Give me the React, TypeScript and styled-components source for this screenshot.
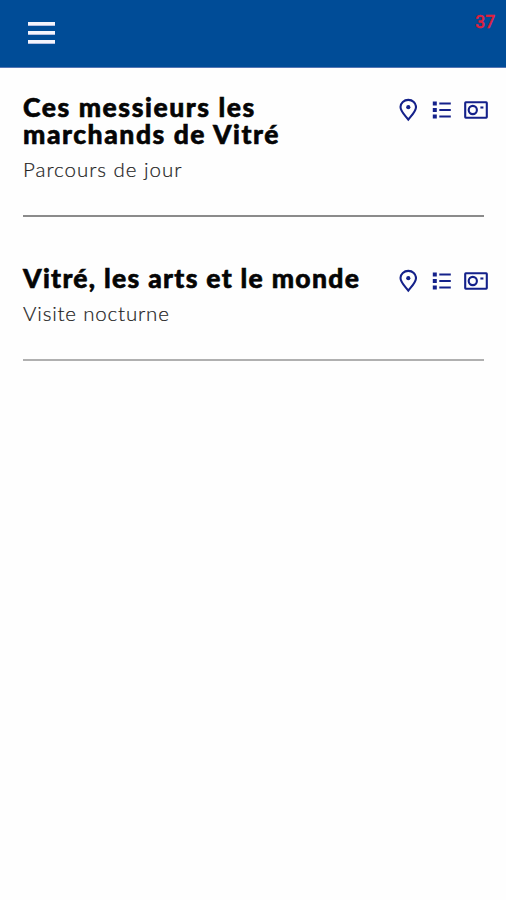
import React from "react";
import styled, { createGlobalStyle } from "styled-components";

const GlobalStyle = createGlobalStyle`
  * { box-sizing: border-box; }
  body { margin: 0; background: #fefefe; }
`;

const Page = styled.div`
  min-height: 900px;
  background: #fefefe;
  font-family: Lato, "Open Sans", sans-serif;
`;

const Header = styled.header`
  display: flex;
  justify-content: space-between;
  align-items: flex-start;
  height: 68px;
  padding: 0 11px 0 28px;
  background: #004c97;
  border-bottom: 1px solid #5576b4;
`;

const MenuButton = styled.button`
  display: flex;
  flex-direction: column;
  gap: 5px;
  margin-top: 22px;
  padding: 0;
  border: 0;
  background: none;
`;

const MenuBar = styled.span`
  width: 27px;
  height: 4px;
  background: #f4f4fc;
  border-bottom: 1px solid #b4bfe0;
`;

const Counter = styled.span`
  margin-top: 11px;
  font: 17.5px/22px Roboto, sans-serif;
  color: #e0203c;
  -webkit-text-stroke: 0.6px #e0203c;
`;

const List = styled.main`
  padding: 0 22px 0 23px;
`;

const Item = styled.article<{ $height: number; $top: number; $line: string }>`
  display: flex;
  justify-content: space-between;
  align-items: flex-start;
  height: ${(p) => p.$height}px;
  padding-top: ${(p) => p.$top}px;
  border-bottom: 2px solid ${(p) => p.$line};
`;

const Title = styled.h2`
  margin: 0;
  font-size: 26.5px;
  line-height: 27px;
  font-weight: 900;
  color: #050505;
  -webkit-text-stroke: 0.6px #050505;
`;

const TitleLine = styled.span<{ $tracking: number }>`
  display: block;
  white-space: nowrap;
  letter-spacing: ${(p) => p.$tracking}px;
`;

const Subtitle = styled.p<{ $tracking: number }>`
  margin: 9px 0 0;
  font-size: 20.5px;
  line-height: 24px;
  color: #222;
  font-weight: 300;
  -webkit-text-stroke: 0.2px #222;
  letter-spacing: ${(p) => p.$tracking}px;
`;

const Actions = styled.div`
  display: flex;
  align-items: center;
  height: 24px;
  margin: 4px -4px 0 0;
  color: #14218a;
`;

const Icon = styled.svg<{ $gap?: number }>`
  display: block;
  flex: none;
  margin-left: ${(p) => p.$gap ?? 0}px;
  fill: none;
  stroke: currentColor;
`;

const PinIcon = () => (
  <Icon width="18" height="24" viewBox="0 0 18 24" strokeWidth="2.1">
    <path d="M9.3 1.9C5 1.9 1.5 5 1.5 9C1.5 13.6 6.5 17.8 9.3 21.6C12.1 17.8 17 13.6 17 9C17 5 13.6 1.9 9.3 1.9Z" />
    <circle cx="9.3" cy="9.2" r="2.1" fill="currentColor" stroke="none" />
  </Icon>
);

const ListIcon = () => (
  <Icon $gap={15} width="19" height="18" viewBox="0 0 19 18">
    <path d="M0.8 2.5h4M0.8 9h4M0.8 15.5h4" strokeWidth="3.8" />
    <path d="M7.3 2.5h11.5M7.3 9h11.5M7.3 15.5h11.5" strokeWidth="2.1" />
  </Icon>
);

const CameraIcon = () => (
  <Icon $gap={13} width="24" height="18" viewBox="0 0 24 18" strokeWidth="2.1">
    <rect x="1.2" y="1.3" width="21.6" height="15.4" rx="0.6" />
    <circle cx="8.8" cy="9" r="4.1" />
    <path d="M16.4 6.5h3" />
  </Icon>
);

const tours = [
  {
    height: 149,
    top: 26,
    line: "#8b8b8b",
    lines: [
      { text: "Ces messieurs les", tracking: 1.57 },
      { text: "marchands de Vitré", tracking: 1.55 },
    ],
    subtitle: "Parcours de jour",
    subTracking: 0.98,
  },
  {
    height: 144,
    top: 48,
    line: "#b0b0b0",
    lines: [{ text: "Vitré, les arts et le monde", tracking: 1.3 }],
    subtitle: "Visite nocturne",
    subTracking: 0.82,
  },
];

export default function App() {
  return (
    <Page>
      <GlobalStyle />
      <Header>
        <MenuButton aria-label="Menu">
          <MenuBar />
          <MenuBar />
          <MenuBar />
        </MenuButton>
        <Counter>37</Counter>
      </Header>
      <List>
        {tours.map((t) => (
          <Item key={t.subtitle} $height={t.height} $top={t.top} $line={t.line}>
            <div>
              <Title>
                {t.lines.map((l) => (
                  <TitleLine key={l.text} $tracking={l.tracking}>
                    {l.text}
                  </TitleLine>
                ))}
              </Title>
              <Subtitle $tracking={t.subTracking}>{t.subtitle}</Subtitle>
            </div>
            <Actions>
              <PinIcon />
              <ListIcon />
              <CameraIcon />
            </Actions>
          </Item>
        ))}
      </List>
    </Page>
  );
}
